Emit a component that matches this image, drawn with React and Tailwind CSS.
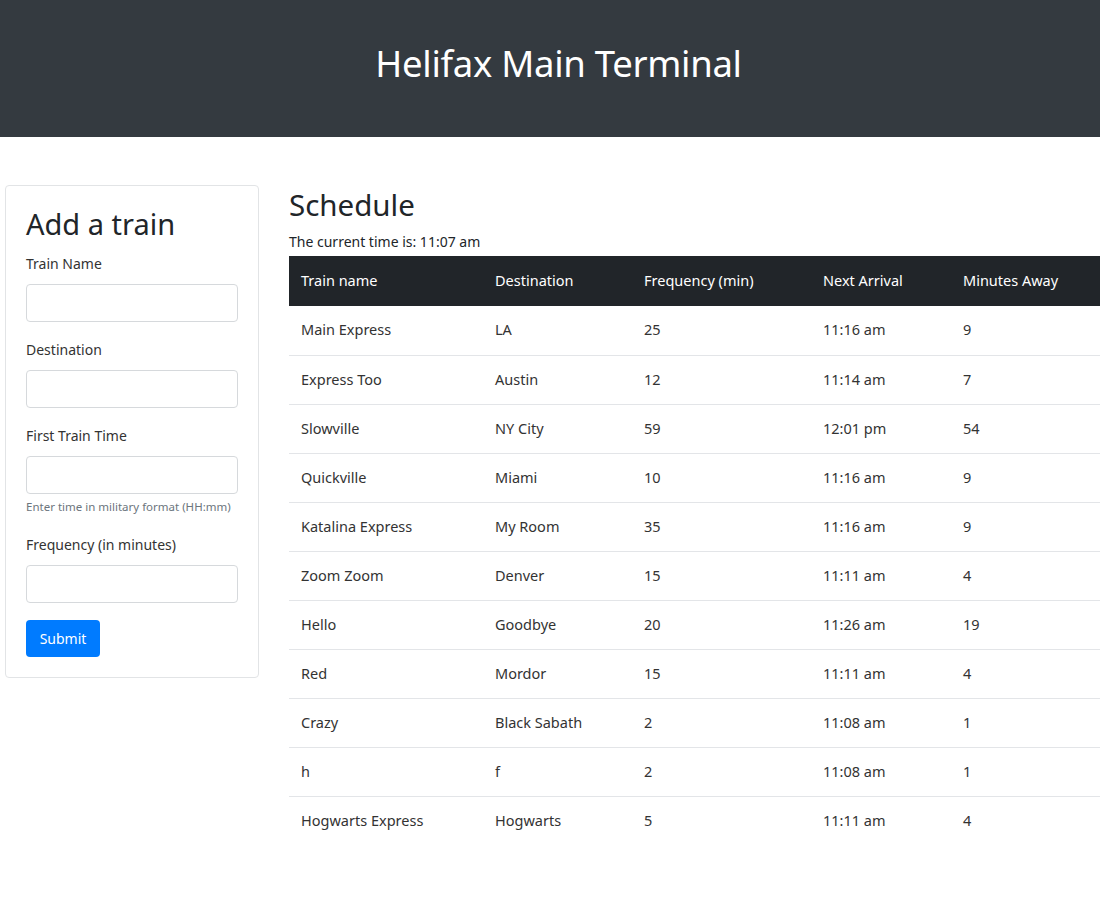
import React from 'react';

const trains = [
  ['Main Express', 'LA', '25', '11:16 am', '9'],
  ['Express Too', 'Austin', '12', '11:14 am', '7'],
  ['Slowville', 'NY City', '59', '12:01 pm', '54'],
  ['Quickville', 'Miami', '10', '11:16 am', '9'],
  ['Katalina Express', 'My Room', '35', '11:16 am', '9'],
  ['Zoom Zoom', 'Denver', '15', '11:11 am', '4'],
  ['Hello', 'Goodbye', '20', '11:26 am', '19'],
  ['Red', 'Mordor', '15', '11:11 am', '4'],
  ['Crazy', 'Black Sabath', '2', '11:08 am', '1'],
  ['h', 'f', '2', '11:08 am', '1'],
  ['Hogwarts Express', 'Hogwarts', '5', '11:11 am', '4'],
];

const cols = ['w-[194px]', 'w-[149px]', 'w-[179px]', 'w-[140px]', 'w-[149px]'];
const heads = ['Train name', 'Destination', 'Frequency (min)', 'Next Arrival', 'Minutes Away'];

const Label = ({ children }) => (
  <label className="block text-[14px] text-[#333] mb-[11px] leading-[18px]">{children}</label>
);

const Input = () => <input className="block w-full h-[38px] border border-[#d6d9dc] rounded-[4px] bg-white" />;

export default function App() {
  return (
    <div className="min-h-[900px] bg-white text-[#212529] overflow-hidden" style={{ fontFamily: '"Noto Sans", "Open Sans", sans-serif' }}>
      <header className="h-[137px] bg-[#343a40] flex items-center justify-center">
        <h1 className="text-[36.5px] text-white leading-none pb-[10px] pl-[17px] tracking-[-0.3px]">Helifax Main Terminal</h1>
      </header>

      <div className="flex items-start pt-[48px]">
        {/* Form card */}
        <div className="ml-[5px] w-[255px] border border-[#e2e4e6] rounded-[4px] px-[20px] pt-[18px] pb-[20px]">
          <h2 className="text-[29px] leading-[40px] mb-[11px] text-[#212529]">Add a train</h2>
          <div className="mb-[19px]">
            <Label>Train Name</Label>
            <Input />
          </div>
          <div className="mb-[19px]">
            <Label>Destination</Label>
            <Input />
          </div>
          <div className="mb-[22px]">
            <Label>First Train Time</Label>
            <Input />
            <p className="text-[11.5px] text-[#6c757d] mt-[6px] leading-[14px]">Enter time in military format (HH:mm)</p>
          </div>
          <div className="mb-[17px]">
            <Label>Frequency (in minutes)</Label>
            <Input />
          </div>
          <button className="h-[37px] w-[74px] bg-[#007bff] text-white text-[14px] rounded-[4px]">Submit</button>
        </div>

        {/* Schedule */}
        <div className="ml-[30px] flex-1">
          <h2 className="text-[29.5px] leading-[40px] text-[#212529]">Schedule</h2>
          <p className="text-[14px] leading-[18px] mt-[8px] mb-[5px]">The current time is: 11:07 am</p>
          <table className="border-collapse text-[14.5px] w-[811px]">
            <thead>
              <tr className="bg-[#212529] text-white">
                {heads.map((h, i) => (
                  <th key={h} className={`${cols[i]} h-[50px] px-[12px] text-left font-normal`}>{h}</th>
                ))}
              </tr>
            </thead>
            <tbody>
              {trains.map((row, r) => (
                <tr key={r} className={r < trains.length - 1 ? 'border-b border-[#e3e5e8]' : ''}>
                  {row.map((c, i) => (
                    <td key={i} className="h-[49px] px-[12px] text-[#333]">{c}</td>
                  ))}
                </tr>
              ))}
            </tbody>
          </table>
        </div>
      </div>
    </div>
  );
}
